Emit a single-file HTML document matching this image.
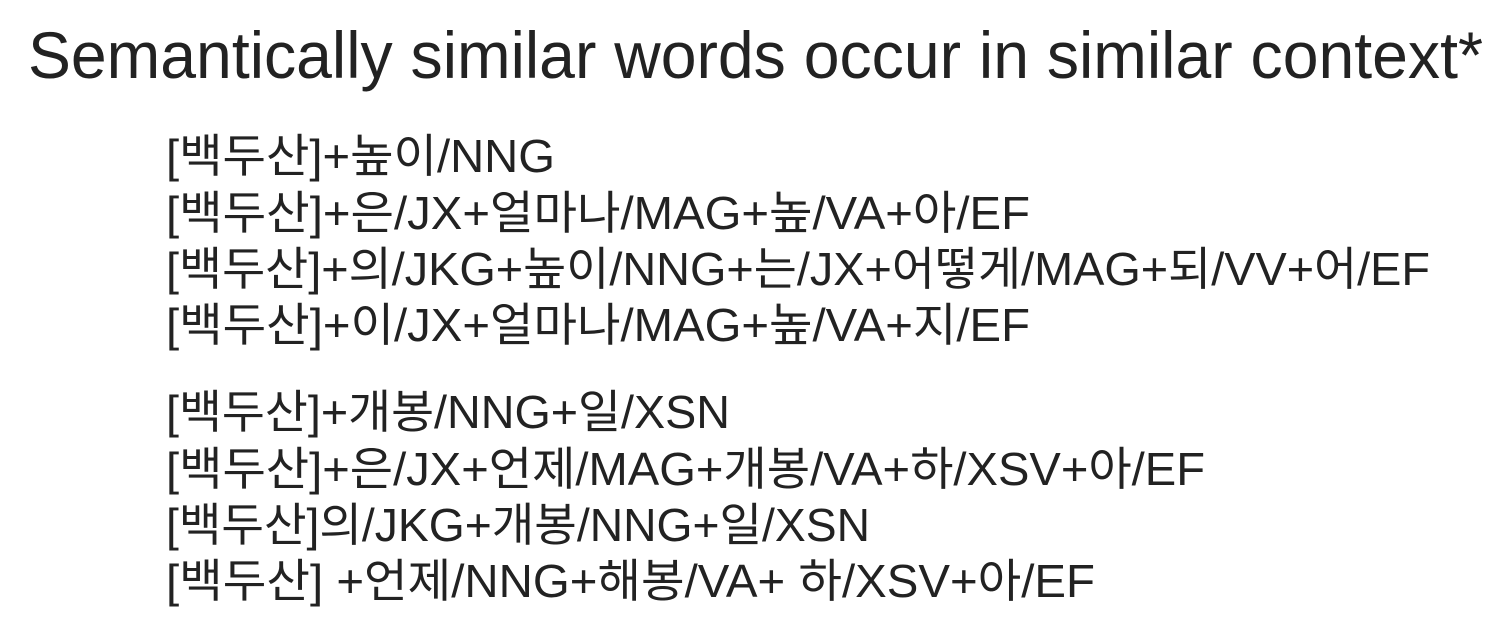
<!DOCTYPE html>
<html><head><meta charset="utf-8"><style>
html,body{margin:0;padding:0;background:#fff;width:1500px;height:642px;overflow:hidden}
svg{display:block}
text{fill:#222;font-family:"Liberation Sans","Noto Sans CJK KR",sans-serif}
</style></head><body>
<svg width="1500" height="642" viewBox="0 0 1500 642">
<text x="28" y="78" font-size="66" textLength="1455" lengthAdjust="spacingAndGlyphs">Semantically similar words occur in similar context*</text>
<g font-size="46">
<text x="166" y="172" textLength="389" lengthAdjust="spacingAndGlyphs">[백두산]+높이/NNG</text>
<text x="166" y="229" textLength="864" lengthAdjust="spacingAndGlyphs">[백두산]+은/JX+얼마나/MAG+높/VA+아/EF</text>
<text x="166" y="285" textLength="1264" lengthAdjust="spacingAndGlyphs">[백두산]+의/JKG+높이/NNG+는/JX+어떻게/MAG+되/VV+어/EF</text>
<text x="166" y="341" textLength="864" lengthAdjust="spacingAndGlyphs">[백두산]+이/JX+얼마나/MAG+높/VA+지/EF</text>
<text x="166" y="428" textLength="564" lengthAdjust="spacingAndGlyphs">[백두산]+개봉/NNG+일/XSN</text>
<text x="166" y="485" textLength="1039" lengthAdjust="spacingAndGlyphs">[백두산]+은/JX+언제/MAG+개봉/VA+하/XSV+아/EF</text>
<text x="166" y="541" textLength="704" lengthAdjust="spacingAndGlyphs">[백두산]의/JKG+개봉/NNG+일/XSN</text>
<text x="166" y="597" textLength="929" lengthAdjust="spacingAndGlyphs">[백두산] +언제/NNG+해봉/VA+ 하/XSV+아/EF</text>
</g>
</svg>
</body></html>
